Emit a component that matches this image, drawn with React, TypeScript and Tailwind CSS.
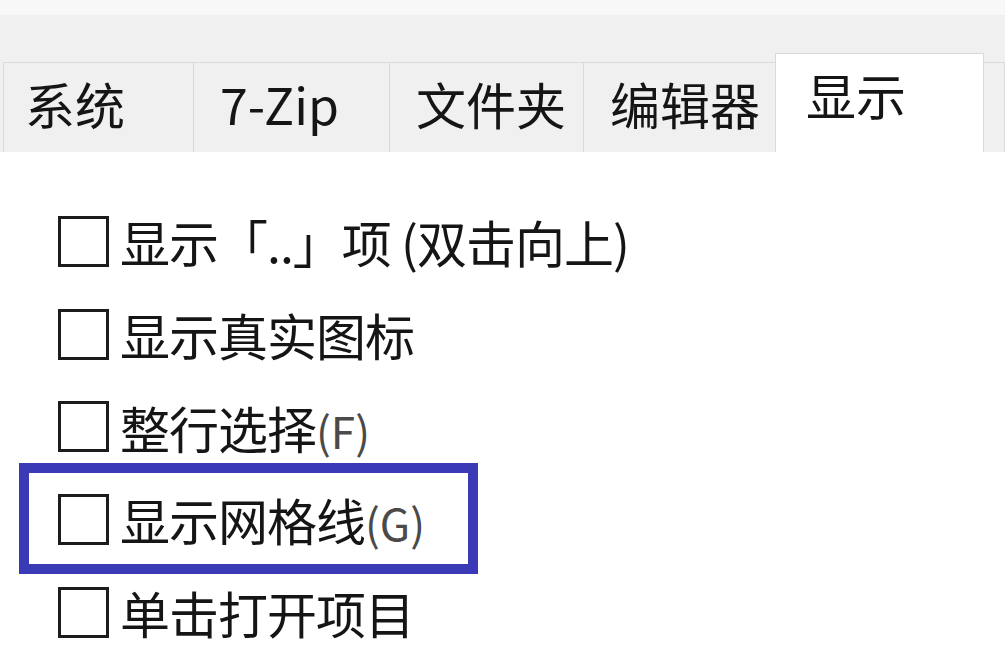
import React from 'react';

const tabs = [
  { label: '系统', w: 'w-[191px]', pl: 'pl-[21px]' },
  { label: '7-Zip', w: 'w-[197px]', pl: 'pl-[26px]' },
  { label: '文件夹', w: 'w-[195px]', pl: 'pl-[26px]' },
  { label: '编辑器', w: 'w-[193px]', pl: 'pl-[26px]' },
];

const options = [
  { label: '显示「..」项 (双击向上)' },
  { label: '显示真实图标' },
  { label: '整行选择', key: '(F)' },
  { label: '显示网格线', key: '(G)', marked: true },
  { label: '单击打开项目' },
];

const Checkbox = () => (
  <span className="shrink-0 h-[51px] w-[51px] border-[3px] border-[#1c1c1c] bg-white" />
);

export default function App() {
  return (
    <div
      className="w-[1005px] h-[654px] overflow-hidden bg-white text-[#151515]"
      style={{ fontFamily: '"Noto Sans CJK SC", "Noto Sans", sans-serif' }}
    >
      {/* Tab strip */}
      <div className="h-[152px] bg-[#f0f0f0] flex flex-col">
        <div className="h-[15px] bg-[#f8f8f8]" />
        <div className="flex-1 flex items-end pl-[3px]">
          {tabs.map((t) => (
            <div
              key={t.label}
              className={`${t.w} ${t.pl} h-[90px] -ml-px first:ml-0 border border-b-0 border-[#d9d9d9] bg-[#f0f0f0] flex items-center pb-[10px] text-[50px] leading-none`}
            >
              {t.label}
            </div>
          ))}
          <div className="w-[209px] h-[99px] -ml-px border border-b-0 border-[#d9d9d9] bg-white flex items-start pt-[15px] pl-[30px] text-[50px] leading-none">
            显示
          </div>
          <div className="flex-1 h-[90px] -ml-px border border-b-0 border-[#d9d9d9] bg-[#f0f0f0]" />
        </div>
      </div>

      {/* Options */}
      <div className="pt-[43px] pl-[58px] flex flex-col">
        {options.map((o) => (
          <div key={o.label} className="relative h-[92.7px] flex items-center gap-[11px]">
            <Checkbox />
            <span className="text-[50px] leading-none whitespace-nowrap tracking-[-1px]">
              {o.label}
              {o.key && <span className="text-[#4a4a4a] tracking-normal text-[44px]">{o.key}</span>}
            </span>
            {o.marked && (
              <span className="absolute left-[-39px] top-[-10px] bottom-[-8px] w-[459px] border-[10px] border-[#3b3ab6] pointer-events-none" />
            )}
          </div>
        ))}
      </div>
    </div>
  );
}
